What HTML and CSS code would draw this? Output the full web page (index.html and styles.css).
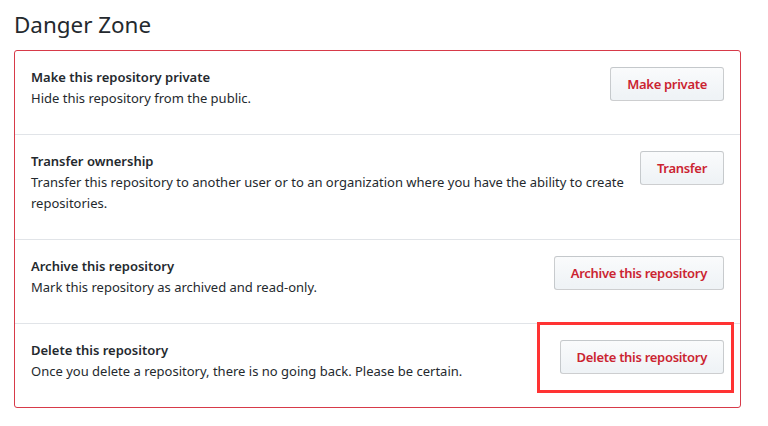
FILE: index.html
```html
<!DOCTYPE html>
<html>
<head>
<meta charset="utf-8">
<link rel="stylesheet" href="styles.css">
</head>
<body>
<div class="page">
  <h2 class="subhead">Danger Zone</h2>
  <ul class="box">
    <li class="row">
      <div class="info">
        <strong class="title">Make this repository private</strong>
        <p class="desc">Hide this repository from the public.</p>
      </div>
      <button class="btn">Make private</button>
    </li>
    <li class="row">
      <div class="info">
        <strong class="title">Transfer ownership</strong>
        <p class="desc">Transfer this repository to another user or to an organization where you have the ability to create repositories.</p>
      </div>
      <button class="btn">Transfer</button>
    </li>
    <li class="row">
      <div class="info">
        <strong class="title">Archive this repository</strong>
        <p class="desc">Mark this repository as archived and read-only.</p>
      </div>
      <button class="btn">Archive this repository</button>
    </li>
    <li class="row row-marked">
      <div class="info">
        <strong class="title">Delete this repository</strong>
        <p class="desc">Once you delete a repository, there is no going back. Please be certain.</p>
      </div>
      <button class="btn">Delete this repository</button>
      <span class="highlight"></span>
    </li>
  </ul>
</div>
</body>
</html>
```

FILE: styles.css
```css
* { box-sizing: border-box; }
html, body { margin: 0; padding: 0; background: #fff; }
body {
  font-family: "Noto Sans", "Open Sans", sans-serif;
  color: #24292e;
  font-size: 13px;
  line-height: 21px;
}
.page {
  padding: 10px 0 0 14px;
}
.subhead {
  margin: 0 0 10px 0;
  font-size: 22.4px;
  line-height: 30px;
  font-weight: 400;
  color: #24292e;
}
.box {
  list-style: none;
  margin: 0;
  padding: 0;
  width: 727px;
  border: 1px solid #d73a49;
  border-radius: 3px;
}
.row {
  display: flex;
  align-items: flex-start;
  gap: 16px;
  padding: 16px;
  border-top: 1px solid #e1e4e8;
}
.row:first-child { border-top: 0; }
.row-marked { position: relative; }
.info { flex: 1; min-width: 0; }
.title {
  display: block;
  font-weight: 600;
}
.desc {
  margin: 0 0 9px 0;
}
.btn {
  flex: none;
  font-family: inherit;
  font-size: 13px;
  font-weight: 600;
  line-height: 20px;
  letter-spacing: -0.3px;
  padding: 6px 16px;
  color: #cb2431;
  background: linear-gradient(-180deg, #fafbfc 0%, #eff3f6 90%);
  border: 1px solid rgba(27, 31, 35, 0.2);
  border-radius: 3px;
  white-space: nowrap;
}
.highlight {
  position: absolute;
  left: 522px;
  top: -2px;
  width: 197px;
  height: 71px;
  border: 3px solid #ff3333;
}
```
